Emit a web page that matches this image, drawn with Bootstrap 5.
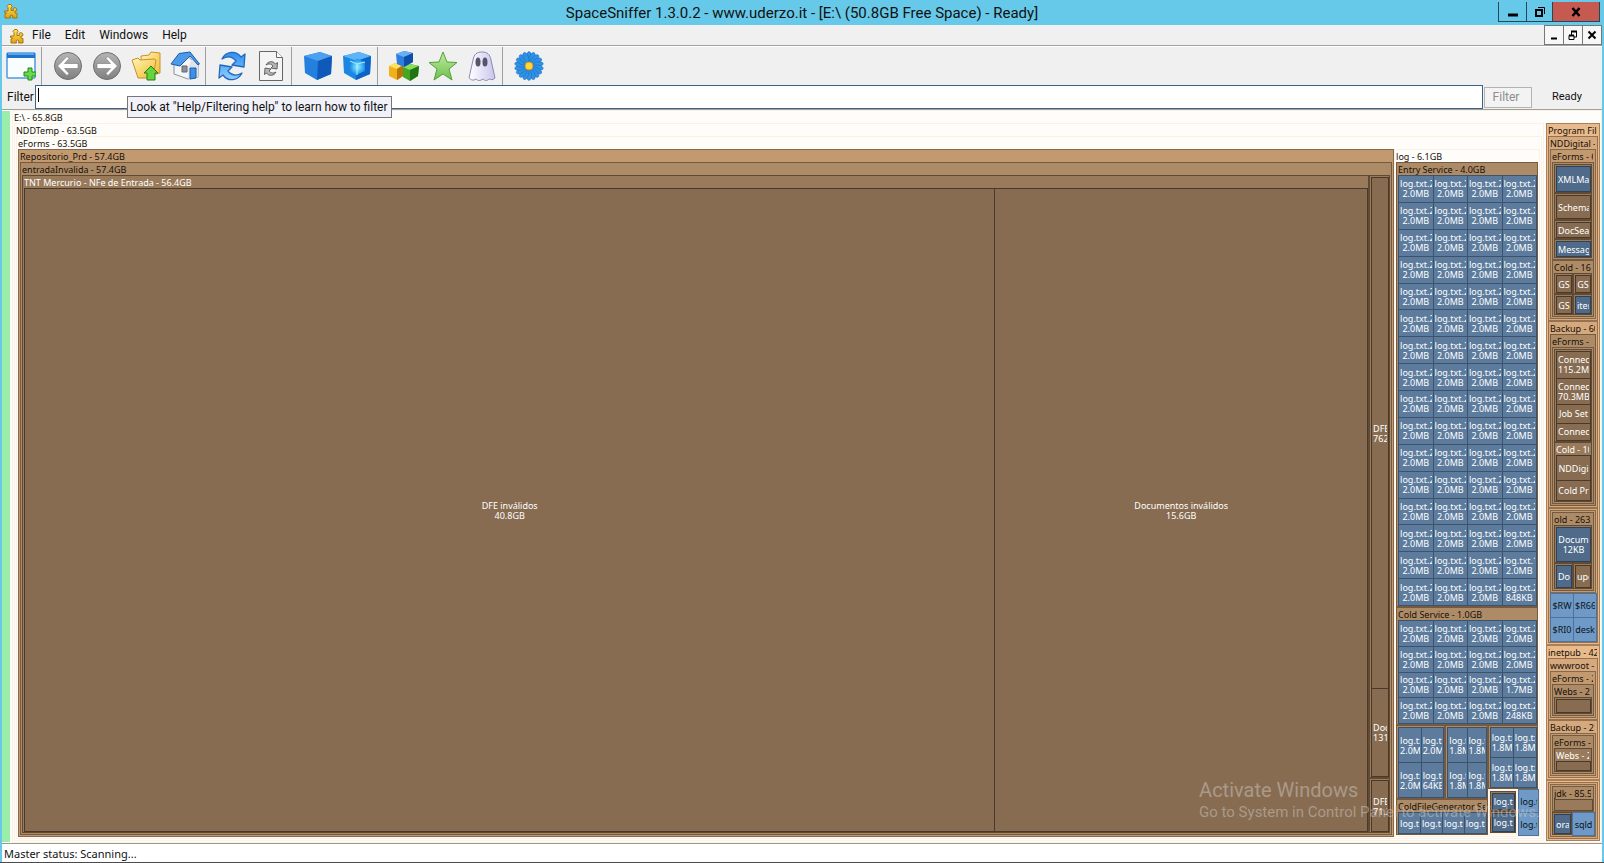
<!DOCTYPE html>
<html lang="en">
<head>
<meta charset="utf-8">
<meta name="viewport" content="width=device-width, initial-scale=1">
<title>SpaceSniffer</title>
<link href="https://cdn.jsdelivr.net/npm/bootstrap@5.3.0/dist/css/bootstrap.min.css" rel="stylesheet">
<style>
body{font:12px/16px Roboto,"Open Sans",sans-serif;color:#111;background:#66c9e9}
.titlebar{height:25px;display:grid;grid-template-columns:1fr auto 1fr}
.titlebar h1{font-size:15px;line-height:27px;margin:0;font-weight:400}
.puzzle{width:14px;height:15px}
.winbtns{height:20px;margin:2px 4px 0 0}
.winbtns button,.mdibtns button{border:1px solid #24485a;background:none;border-radius:0;padding:0;line-height:1}
.winbtns button{border-top:0;margin-left:-1px}
.winbtns .w-min{width:29px}.winbtns .w-res{width:27px}
.winbtns .w-close{width:48px;background:#c75a50}
.frame{margin:0 2px;background:#f0f0f0;min-height:0}
.menubar{height:21px;border-bottom:1px solid #a3a3a3}
.menubar .puzzle{margin:4px 8px 0}
.menus{gap:14px}
.menubar a{color:#111;text-decoration:none;line-height:20px}
.mdibtns button{width:20px;height:20px;border-color:#777;background:#f7f7f7;margin-left:-1px}
.toolrow{height:39px;border-top:1px solid #fff}
.toolrow .tool{width:39px;border:0;background:none;padding:0 2px 0 0}
.toolrow .tool svg{width:30px;height:30px;display:block;margin:auto}
.sep{width:8px;border-left:1px solid #a0a0a0}
.filterrow{height:25px;border-bottom:1px solid #a0a0a0}
.filterrow label{width:33px;padding-left:5px}
.filterrow input{height:24px;border:1px solid #3a6384;border-radius:0;background:#fff;padding:0 3px;font-size:12px;outline:0}
.filterrow button{width:48px;height:21px;margin-left:1px;border:1px solid #b4b4b4;background:#f3f3f3;color:#8d8d8d;border-radius:0;padding:0 4px 0 0;font-size:12px}
.ready{width:70px;padding-left:20px;font-size:11px}
.caret{left:36px;top:3px;width:1px;height:14px;background:#000}
.tip{left:125px;top:11px;z-index:5;background:#f1f1f9;border:1px solid #767676;padding:1px 4px 1px 2px;line-height:18px;white-space:nowrap}
.statusbar{height:19px;background:#fff;border-top:1px solid #9a9a94;font:11px/20px "Noto Sans","Open Sans",sans-serif;padding-left:2px}
.taskedge{height:1px;background:#4b4b4b}
/* treemap */
.map{background:#fffdfa;font:9px/10px "Noto Sans","Open Sans",sans-serif;min-height:0}
.free{width:8px;margin:1px 2px 1px 0;background:#9bedaa}
.node{display:flex;flex-direction:column;min-width:0;min-height:0;overflow:hidden;border:1px solid var(--line);padding:0 1px 1px;background:var(--fill);color:#15100a}
.map>.node{flex:1 1 0}
.node.bare{padding-top:1px}
.split{display:grid;min-width:0;min-height:0;flex:1 1 0}
.cap{height:12px;line-height:14px;flex:none;white-space:nowrap;overflow:hidden;margin-right:1px}
.tile{display:flex;align-items:center;min-width:0;min-height:0;overflow:hidden;border:1px solid var(--line);background:var(--fill);color:#fff;padding:1px 1px 0;margin:0 -1px -1px 0}
.tile span{display:block;width:100%;text-align:center;white-space:pre;overflow:hidden}
.pale{--fill:#fffdf9;--line:#fdf1e4}
.t0{--fill:#e9ba8b;--line:#a98058}
.t1{--fill:#d5a87d;--line:#957252}
.t2{--fill:#c39a70;--line:#86694b}
.t3{--fill:#ae8b67;--line:#735a40}
.t4{--fill:#997b5c;--line:#604a34}
.leaf{--fill:#876c51;--line:#4a3929}
.node.t4.lit{color:#fff}
.blue{--fill:#5d7c9d;--line:#3c536b}
.deep{--fill:#4f6b89;--line:#2f4255}
.sky{--fill:#6f9ac7;--line:#4e729a}
.tile.sky{color:#0c1420}
.hot{--line:#fff8ee;--fill:#fff3e4}
.edge{margin-left:2px}
.mark-os{right:64px;bottom:41px;z-index:4;color:rgba(205,200,194,.5);pointer-events:none}
.mark-os b{display:block;font-weight:400;font-size:20px;line-height:24px}
.mark-os i{display:block;font-style:normal;font-size:15px;line-height:20px;white-space:nowrap}
</style>
</head>
<body class="d-flex flex-column vh-100 overflow-hidden position-relative">
<svg width="0" height="0" class="position-absolute" aria-hidden="true"><defs>
<linearGradient id="gy" x2="0" y2="1"><stop stop-color="#ffe95c"/><stop offset="1" stop-color="#e0a010"/></linearGradient>
<linearGradient id="gg" x2="0" y2="1"><stop stop-color="#b5b5b5"/><stop offset="1" stop-color="#808080"/></linearGradient>
<linearGradient id="gb" x2="0" y2="1"><stop stop-color="#2f8df0"/><stop offset="1" stop-color="#8fd0ff"/></linearGradient>
<linearGradient id="gf" x2="1" y2="1"><stop stop-color="#fff6b8"/><stop offset="1" stop-color="#f2b92e"/></linearGradient>
<linearGradient id="gn" x2="0" y2="1"><stop stop-color="#c0ecA0"/><stop offset="1" stop-color="#6cc04c"/></linearGradient>
<linearGradient id="gp" x2="1" y2="0"><stop stop-color="#fff"/><stop offset="1" stop-color="#c9c4ee"/></linearGradient>
<radialGradient id="gc"><stop stop-color="#8ff4ff"/><stop offset="1" stop-color="#1d8cec"/></radialGradient>
<symbol id="puz" viewBox="0 0 14 15"><path d="M4 7V3.500L3 2.500 4.500.5H7L8 2.500 7 4v2.500h2.500l-.5-2L11 3.500l2 1.500-.5 2H11v2l2 .5v4.500H8.500l.5-2-1.500-1-1.500 1 .5 2H1v-4l1.500-.5V9L.5 8.500V7z" fill="url(#gy)" stroke="#a87512"/></symbol>
<symbol id="loop" viewBox="0 0 30 30"><path d="M5 8C9 0 19-1 24 6l4-3-1 13-12-2 4-4C15 5 10 5 5 8zM25 22C21 30 11 31 6 24l-4 3 1-13 12 2-4 4c4 5 9 5 14 2z" stroke-linejoin="round"/></symbol>
</defs></svg>

<header class="titlebar">
  <svg class="puzzle ms-1 mt-1"><use href="#puz"/></svg>
  <h1>SpaceSniffer 1.3.0.2 - www.uderzo.it - [E:\ (50.8GB Free Space) - Ready]</h1>
  <div class="winbtns d-flex justify-content-end">
    <button class="w-min" aria-label="Minimize"><svg width="12" height="12"><path d="M1 9h10" stroke="#000" stroke-width="3"/></svg></button>
    <button class="w-res" aria-label="Restore"><svg width="12" height="12" fill="none" stroke="#000"><path d="M2 4h6v6H2z" stroke-width="2"/><path d="M4 1.500h6.500V8"/></svg></button>
    <button class="w-close" aria-label="Close"><svg width="10" height="10"><path d="M1.500 1l7 8M8.500 1l-7 8" stroke="#000" stroke-width="2.500"/></svg></button>
  </div>
</header>

<main class="frame flex-grow-1 d-flex flex-column">
  <nav class="menubar d-flex">
    <svg class="puzzle"><use href="#puz"/></svg>
    <div class="menus d-flex flex-grow-1"><a href="#">File</a><a href="#">Edit</a><a href="#">Windows</a><a href="#">Help</a></div>
    <div class="mdibtns d-flex">
      <button aria-label="Minimize child"><svg width="12" height="12"><path d="M3 9.500h6" stroke="#000" stroke-width="2"/></svg></button>
      <button aria-label="Restore child"><svg width="12" height="12" fill="none" stroke="#000"><path d="M2 6.500h5v4H2zM4.500 6V2.500h5V8H7"/><path d="M2 6.500h5M4 2.500h6" stroke-width="2"/></svg></button>
      <button aria-label="Close child"><svg width="12" height="12"><path d="M2.500 2.500l7 7M9.500 2.500l-7 7" stroke="#000" stroke-width="2"/></svg></button>
    </div>
  </nav>

  <div class="toolrow d-flex" role="toolbar" aria-label="Main">
    <button class="tool" aria-label="New view"><svg viewBox="0 0 30 30"><rect x="1" y="2" width="28" height="25" rx="1" fill="#fafdff" stroke="#4a9be4" stroke-width="1.500"/><path d="M1 2h28v5H1z" fill="#1f73c9"/><path d="M2 2h26v2H2z" fill="#58a6ea"/><path d="M22 17h4v4h4v4h-4v4h-4v-4h-4v-4h4z" fill="#69d94a" stroke="#1d8a14"/></svg></button>
    <div class="sep"></div>
    <button class="tool" aria-label="Back"><svg viewBox="0 0 30 30"><circle cx="15" cy="15" r="13.500" fill="url(#gg)" stroke="#6e6e6e"/><path d="M4.500 15L14 5.500l2 2-4.500 5H25v5H11.500l4.500 5-2 2z" fill="#fff" stroke="#777" stroke-width=".6"/></svg></button>
    <button class="tool" aria-label="Forward"><svg viewBox="0 0 30 30"><circle cx="15" cy="15" r="13.500" fill="url(#gg)" stroke="#6e6e6e"/><path d="M25.500 15L16 5.500l-2 2 4.500 5H5v5h13.500l-4.500 5 2 2z" fill="#fff" stroke="#777" stroke-width=".6"/></svg></button>
    <button class="tool" aria-label="Parent folder"><svg viewBox="0 0 30 30"><path d="M10 5l8-1 2-3 9 1v20l-18 5z" fill="url(#gf)" stroke="#c8912a"/><path d="M1 9l6-2 2 2 14-1 2 1-3 18H7z" fill="url(#gf)" stroke="#c8912a"/><path d="M20 15l7 7h-3v7h-8v-7h-3z" fill="#67d43e" stroke="#217f16"/></svg></button>
    <button class="tool" aria-label="Home"><svg viewBox="0 0 30 30"><path d="M4 13l13-8 11 9v12l-10 2-14-5z" fill="#f4f5f8" stroke="#8b929c"/><path d="M18 16v12l10-2V14l-6-6z" fill="#dfe3ea"/><path d="M1 13L9 2.500 20 1l9.500 12-1.500 1-8-9-10 10z" fill="#4b9be8" stroke="#1d5cab"/><path d="M12 15h5v6h-5z" fill="#89919c" stroke="#666"/><path d="M20 17h6v10l-6 1z" fill="#3f8fe4" stroke="#1d5cab"/></svg></button>
    <div class="sep"></div>
    <button class="tool" aria-label="Rescan"><svg fill="url(#gb)" stroke="#2168bd" stroke-width="1.300"><use href="#loop"/></svg></button>
    <button class="tool" aria-label="Rescan element"><svg viewBox="0 0 30 30"><path d="M3.500.5h17l6 6v23h-23z" fill="#f4f4f4" stroke="#666"/><path d="M20.500.5v6h6" fill="#fff" stroke="#666"/><use href="#loop" x="7" y="10" width="16" height="15" fill="#b5b5b5" stroke="#555" stroke-width="1.800"/></svg></button>
    <div class="sep"></div>
    <button class="tool" aria-label="Less detail"><svg viewBox="0 0 30 30"><path d="M1 5l16-4 12 4-1 18-14 6L2 22z" fill="#2480de"/><path d="M1 5l16-4 12 4-14 5z" fill="#4da0f0"/><path d="M15 10l14-5-1 18-14 6z" fill="#0f5ab8"/></svg></button>
    <button class="tool" aria-label="More detail"><svg viewBox="0 0 30 30"><path d="M1 5l16-4 12 4-1 18-14 6L2 22z" fill="#1c86e2"/><path d="M1 5l16-4 12 4-14 5z" fill="#5db4f6"/><path d="M15 10l14-5-1 18-14 6z" fill="#0d63c4"/><path d="M8 10l8-2 7 3v9l-9 4-6-4z" fill="url(#gc)"/><path d="M8 10l7 3 8-2M15 13v11" fill="none" stroke="#a5f3ff"/></svg></button>
    <div class="sep"></div>
    <button class="tool" aria-label="Show classes"><svg viewBox="0 0 30 30"><path d="M0 15l6-3 8 2v11l-6 4-8-4z" fill="#f2b01a"/><path d="M0 15l6-3 8 2-6 4z" fill="#ffe063"/><path d="M8 18l6-4v11l-6 4z" fill="#b87508"/><path d="M14 16l7-3 9 2-1 10-8 5-7-4z" fill="#43a625"/><path d="M14 16l7-3 9 2-9 4z" fill="#8add5c"/><path d="M21 19l9-4-1 10-8 5z" fill="#1e7512"/><path d="M7 3l8-3 9 2v9l-9 5-7-3z" fill="#2c7fe0"/><path d="M7 3l8-3 9 2-9 4z" fill="#68b0f5"/><path d="M15 6l9-4v9l-9 5z" fill="#0e4ea6"/></svg></button>
    <button class="tool" aria-label="Tag"><svg viewBox="0 0 30 30"><path d="M15 1l4 10 10 .5-8 6.500 3 11-9-6-9 6 3-11-8-6.500L11 11z" fill="url(#gn)" stroke="#55a03a" stroke-linejoin="round"/></svg></button>
    <button class="tool" aria-label="Ghosts"><svg viewBox="0 0 30 30"><path d="M6 9C7 3 10 1 15 1s8 2 9 8l4 18c-2 2-4 2-6 1-2 2-4 2-6 0-3 2-5 2-7 0-3 2-5 1-7-1z" fill="url(#gp)" stroke="#9088b5"/><ellipse cx="11" cy="11" rx="2.500" ry="4.500" fill="#555568"/><ellipse cx="18" cy="11" rx="2.500" ry="4.500" fill="#555568"/></svg></button>
    <div class="sep"></div>
    <button class="tool" aria-label="Options"><svg viewBox="0 0 30 30"><circle cx="15" cy="15" r="11" fill="#1769bd"/><g id="petals" fill="#2f92e6" stroke="#1769bd" stroke-width=".5"></g><circle cx="15" cy="15" r="4" fill="#ffd83a" stroke="#d79316"/></svg></button>
  </div>

  <div class="filterrow d-flex align-items-center position-relative">
    <label for="filter">Filter</label>
    <input id="filter" class="flex-grow-1" type="text">
    <button disabled>Filter</button>
    <span class="ready">Ready</span>
    <span class="caret position-absolute"></span>
    <div class="tip position-absolute" role="tooltip">Look at "Help/Filtering help" to learn how to filter</div>
  </div>

  <section class="map d-flex flex-grow-1" id="map" aria-label="Disk usage of E:"><div class="free"></div></section>
  <footer class="statusbar">Master status: Scanning...</footer>
</main>
<div class="taskedge"></div>
<div class="mark-os position-absolute"><b>Activate Windows</b><i>Go to System in Control Panel to activate Windows.</i></div>

<script>
// folder: box with an optional caption; split: bare row or column; tile: a file or closed folder
const folder = (cap, size, cls, kids, dir = 'down') => ({type: 'folder', cap, size, cls, kids, dir});
const split = (size, dir, kids) => ({type: 'split', size, dir, kids});
const tile = (cap, size, cls = 'leaf') => ({type: 'tile', cap, size, cls});
const boxed = (cap, size, cls = 'leaf') => folder('', size, 't4', [tile(cap, 1, cls)]);
const logRow = (caps, size) => split(size, 'across', caps.map(c => tile(c, 1, 'blue')));
const M = 'log.txt.2\n2.0MB';
const full = n => Array.from({length: n}, () => logRow([M, M, M, M], 1));

const entry = [...full(14), logRow([M, M, M, 'log.txt.1\n2.0MB'], 1), logRow([M, M, M, 'log.txt.2\n848KB'], 1)];
const cold = [...full(2), logRow([M, M, M, 'log.txt.2\n1.7MB'], 1), logRow([M, M, M, 'log.txt.2\n248KB'], 1)];
const S = 'log.tx\n1.8MB', L = 'log.tx\n2.0MB';

const repo = folder('Repositorio_Prd - 57.4GB', 1377, 't2', [
  folder('entradaInvalida - 57.4GB', 1, 't3', [
    folder('TNT Mercurio - NFe de Entrada - 56.4GB', 1348, 't4 lit', [
      tile('DFE inválidos\n40.8GB', 971), tile('Documentos inválidos\n15.6GB', 373)], 'across'),
    split(21, 'down', [
      folder('', 603, 't4', [tile('DFE\n762', 511), tile('Doc\n131', 88)]),
      folder('', 55, 't4', [tile('DFE\n71.2', 1)])])
  ], 'across')]);

const logs = folder('log - 6.1GB', 146, 'pale', [
  folder('Entry Service - 4.0GB', 445, 't3', entry),
  folder('Cold Service - 1.0GB', 118, 't3', cold),
  split(110, 'across', [
    split(93, 'down', [
      split(74, 'across', [
        folder('', 50, 't3', [logRow([L, L], 1), logRow([L, 'log.tx\n64KB'], 1)]),
        folder('', 43, 't3', [logRow([S, S], 1), logRow([S, S], 1)])]),
      folder('ColdFileGenerator Se', 36, 't3', [logRow(['log.tx', 'log.t', 'log.t', 'log.tx'], 1)])]),
    split(51, 'down', [
      folder('', 64, 't3', [logRow([S, S], 1), logRow([S, S], 1)]),
      split(46, 'across', [
        folder('', 31, 'hot', [folder('', 20, 't4', [tile('log.tx', 1, 'deep')]), folder('', 23, 't4', [tile('log.tx', 1, 'deep')])]),
        split(20, 'down', [tile('log.t', 1, 'sky'), tile('log.t', 1, 'sky')])])])])
]);

const side = split(56, 'down', [
  folder('Program Files', 522, 't0', [
    folder('NDDigital -', 185, 't1', [folder('eForms - 60', 1, 't2', [
      folder('', 98, 't3', [boxed('XMLMa', 30, 'deep'), boxed('Schema', 27), boxed('DocSea', 20), boxed('Messag', 19, 'deep')]),
      folder('Cold - 16', 57, 't3', [
        split(1, 'across', [boxed('GS', 1), boxed('GS', 1)]),
        split(1, 'across', [boxed('GS', 1), boxed('iter', 1, 'deep')])])])]),
    folder('Backup - 60', 187, 't1', [folder('eForms -', 1, 't3', [folder('', 1, 't3', [
      folder('', 94, 't4', [tile('Connec\n115.2MB', 27), tile('Connec\n70.3MB', 26), tile('Job Set', 19), tile('Connec', 18)]),
      folder('Cold - 10', 60, 't4 lit', [tile('NDDigi', 24), tile('Cold Pr', 19)])])])]),
    folder('', 135, 't1', [
      folder('', 84, 't2', [folder('old - 263.', 1, 't3', [boxed('Docum\n12KB', 38, 'deep'),
        split(26, 'across', [boxed('Do', 1, 'deep'), boxed('upd', 1)])])]),
      split(49, 'down', [
        split(1, 'across', [tile('$RW', 1, 'sky'), tile('$R66', 1, 'sky')]),
        split(1, 'across', [tile('$RI0', 1, 'sky'), tile('desk', 1, 'sky')])])])]),
  folder('inetpub - 424', 135, 't0', [
    folder('wwwroot -', 61, 't1', [folder('eForms - 2', 1, 't2', [folder('Webs - 21', 1, 't3', [boxed('', 1)])])]),
    folder('Backup - 21', 58, 't1', [folder('', 1, 't2', [folder('eForms -', 1, 't3', [folder('Webs - 2', 1, 't4 lit', [tile('', 1)])])])])]),
  folder('', 61, 't0', [folder('', 1, 't1', [folder('', 1, 't2', [
    folder('jdk - 85.5', 27, 't3', [tile('', 1, 't4')]),
    split(23, 'across', [boxed('ora', 20, 'deep'), tile('sqld', 22, 'sky')])])])])
]);
side.extra = 'edge';

const drive = folder('E:\\ - 65.8GB', 1, 'pale', [
  folder('NDDTemp - 63.5GB', 1530, 'pale', [folder('eForms - 63.5GB', 1, 'pale', [repo, logs], 'across')]),
  side], 'across');

function draw(n) {
  const el = document.createElement('div');
  if (n.type === 'tile') {
    el.className = 'tile ' + n.cls;
    const s = document.createElement('span');
    s.textContent = n.cap;
    el.append(s);
    return el;
  }
  let holder = el;
  if (n.type === 'folder') {
    el.className = 'node ' + n.cls + (n.cap ? '' : ' bare');
    if (n.cap) {
      const c = document.createElement('div');
      c.className = 'cap';
      c.textContent = n.cap;
      el.append(c);
    }
    holder = document.createElement('div');
    el.append(holder);
  }
  holder.classList.add('split');
  const tracks = n.kids.map(k => `minmax(0, ${k.size}fr)`).join(' ');
  holder.style.gridTemplate = n.dir === 'across' ? `minmax(0, 1fr) / ${tracks}` : `${tracks} / minmax(0, 1fr)`;
  if (n.extra) el.classList.add(n.extra);
  n.kids.forEach(k => holder.append(draw(k)));
  return el;
}
document.getElementById('map').append(draw(drive));

const petals = document.getElementById('petals');
for (let a = 0; a < 360; a += 20) {
  const p = document.createElementNS('http://www.w3.org/2000/svg', 'ellipse');
  p.setAttribute('cx', 15); p.setAttribute('cy', 6); p.setAttribute('rx', 2.6); p.setAttribute('ry', 5.4);
  p.setAttribute('transform', `rotate(${a} 15 15)`);
  petals.append(p);
}
</script>
<script src="https://cdn.jsdelivr.net/npm/bootstrap@5.3.0/dist/js/bootstrap.bundle.min.js"></script>
</body>
</html>
